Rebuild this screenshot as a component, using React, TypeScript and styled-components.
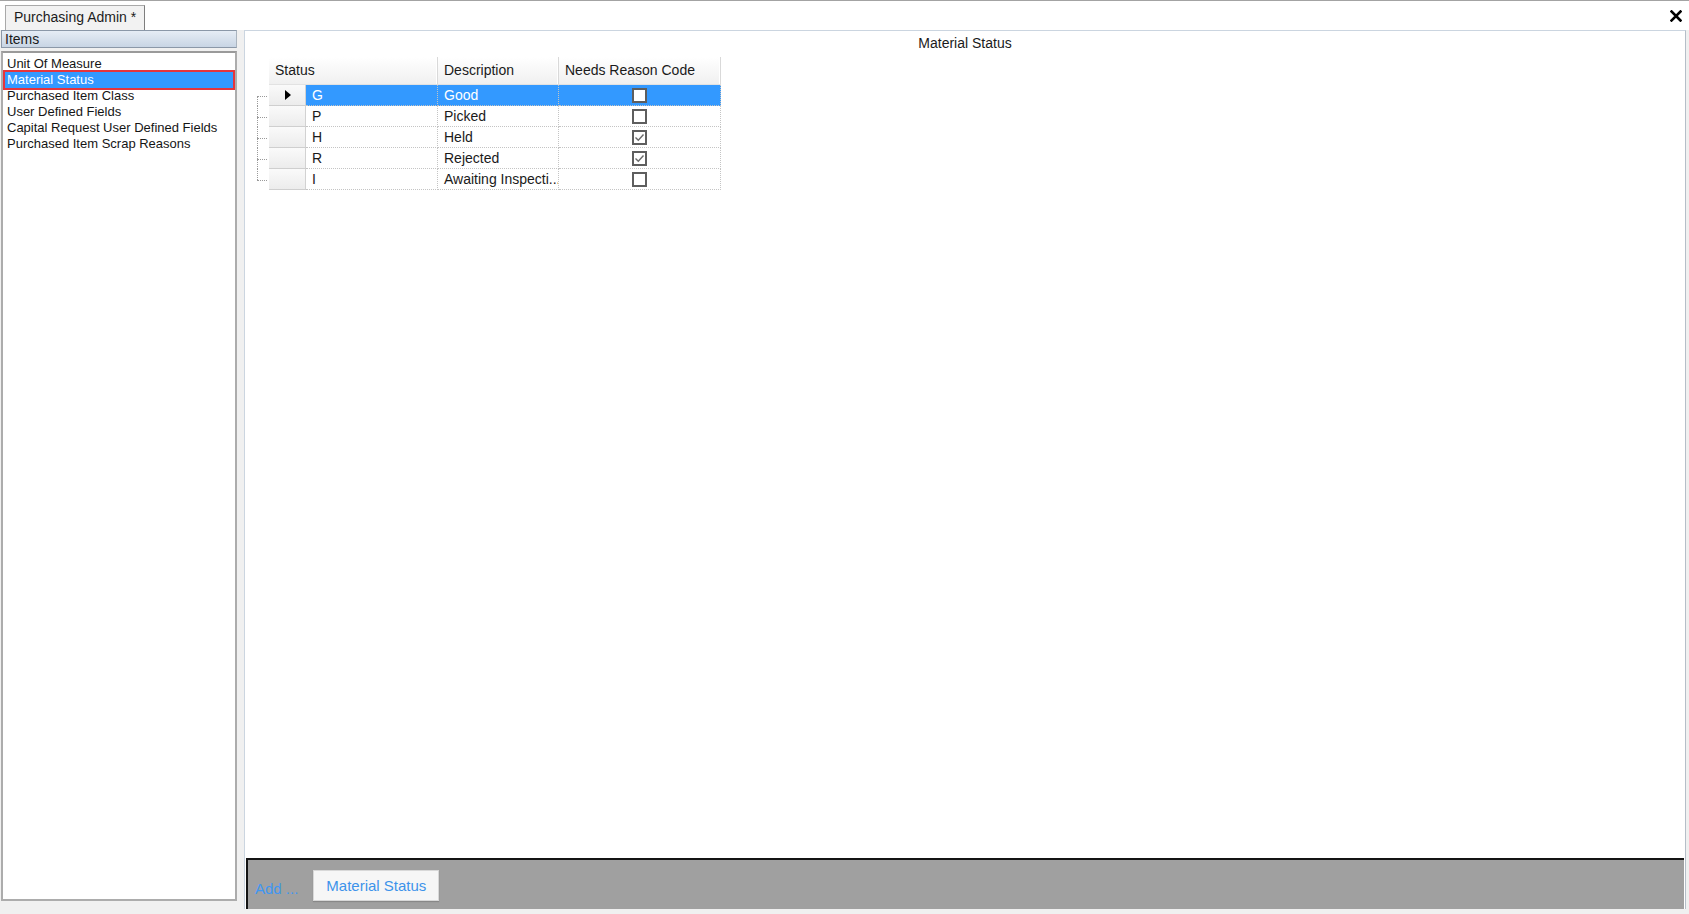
import React from 'react';
import styled, { createGlobalStyle } from 'styled-components';

const GlobalStyle = createGlobalStyle`
  html, body {
    margin: 0;
    padding: 0;
  }
  body {
    font-family: "Liberation Sans", Arial, sans-serif;
    background: #f0f0f0;
    color: #141414;
  }
  * {
    box-sizing: border-box;
  }
`;

const menuItems = [
  'Unit Of Measure',
  'Material Status',
  'Purchased Item Class',
  'User Defined Fields',
  'Capital Request User Defined Fields',
  'Purchased Item Scrap Reasons',
];

const rows = [
  { code: 'G', description: 'Good', needsReason: false },
  { code: 'P', description: 'Picked', needsReason: false },
  { code: 'H', description: 'Held', needsReason: true },
  { code: 'R', description: 'Rejected', needsReason: true },
  { code: 'I', description: 'Awaiting Inspecti...', needsReason: false },
];

const columns = { rowHeader: 37, status: 132, description: 121, needs: 162 };

export default function App() {
  const selectedItem = 'Material Status';
  const selectedRow = 0;

  return (
    <Window>
      <GlobalStyle />
      <TopStrip>
        <Tab>Purchasing Admin *</Tab>
        <CloseButton aria-label='close'>
          <svg width='12' height='12' viewBox='0 0 12 12'>
            <path d='M1.5 1.5 L10.5 10.5 M10.5 1.5 L1.5 10.5' stroke='#000' strokeWidth='2.6' strokeLinecap='square' />
          </svg>
        </CloseButton>
      </TopStrip>

      <Body>
        <LeftPanel>
          <ItemsHeader>Items</ItemsHeader>
          <ItemList>
            {menuItems.map((item) => (
              <ListItem key={item} $selected={item === selectedItem}>
                {item}
              </ListItem>
            ))}
          </ItemList>
        </LeftPanel>

        <RightPanel>
          <PanelTitle>Material Status</PanelTitle>
          <GridArea>
            <HeaderRow>
              <HeaderCell $width={columns.rowHeader + columns.status}>Status</HeaderCell>
              <HeaderCell $width={columns.description}>Description</HeaderCell>
              <HeaderCell $width={columns.needs}>Needs Reason Code</HeaderCell>
            </HeaderRow>
            {rows.map((row, i) => {
              const selected = i === selectedRow;
              return (
                <DataRow key={row.code}>
                  <Connector $first={i === 0} $last={i === rows.length - 1} />
                  <RowHeaderCell>
                    {selected && <RowArrow />}
                  </RowHeaderCell>
                  <DataCell $width={columns.status} $selected={selected}>{row.code}</DataCell>
                  <DataCell $width={columns.description} $selected={selected}>{row.description}</DataCell>
                  <CheckCell $width={columns.needs} $selected={selected}>
                    <CheckBox>
                      {row.needsReason && (
                        <svg width='11' height='11' viewBox='0 0 11 11'>
                          <path d='M1.5 5.5 L4.3 8.3 L9.5 2.5' fill='none' stroke='#6a6a6a' strokeWidth='1.4' />
                        </svg>
                      )}
                    </CheckBox>
                  </CheckCell>
                </DataRow>
              );
            })}
          </GridArea>
          <BottomBar>
            <AddLink>Add ...</AddLink>
            <BarButton>Material Status</BarButton>
          </BottomBar>
        </RightPanel>
      </Body>
    </Window>
  );
}

const Window = styled.div`
  width: 1689px;
  height: 914px;
  display: flex;
  flex-direction: column;
  background: #f0f0f0;
  overflow: hidden;
`;

const TopStrip = styled.div`
  flex: none;
  height: 30px;
  display: flex;
  align-items: flex-end;
  justify-content: space-between;
  padding: 0 7px 0 5px;
  background: #ffffff;
  border-top: 1px solid #a3a3a3;
`;

const Tab = styled.div`
  height: 25px;
  padding: 0 8px 0 8px;
  font-size: 14px;
  line-height: 23px;
  color: #1c1c1c;
  background: #f2f2f2;
  border: 1px solid #a9a9a9;
  border-right-color: #7e7e7e;
  border-bottom: none;
`;

const CloseButton = styled.div`
  align-self: center;
  width: 12px;
  height: 12px;
  display: flex;
`;

const Body = styled.div`
  flex: 1;
  min-height: 0;
  display: flex;
  gap: 7px;
`;

const LeftPanel = styled.div`
  width: 236px;
  margin-left: 1px;
  padding-bottom: 13px;
  display: flex;
  flex-direction: column;
`;

const ItemsHeader = styled.div`
  height: 18px;
  padding-left: 3px;
  font-size: 14px;
  line-height: 16px;
  color: #1a1a1a;
  background: linear-gradient(#e6edf5, #c8d5e4);
  border: 1px solid #8b98a8;
  border-right-color: #aab4bf;
`;

const ItemList = styled.div`
  flex: 1;
  margin-top: 3px;
  padding: 3px 2px;
  background: #ffffff;
  border: 2px solid #acacac;
  border-top-color: #9a9a9a;
`;

const ListItem = styled.div<{ $selected?: boolean }>`
  height: 16px;
  padding-left: 2px;
  font-size: 13px;
  line-height: 16px;
  white-space: nowrap;
  color: ${({ $selected }) => ($selected ? '#ffffff' : '#151515')};
  background: ${({ $selected }) => ($selected ? '#3399ff' : 'transparent')};
  outline: ${({ $selected }) => ($selected ? '2px solid #e5353c' : 'none')};
`;

const RightPanel = styled.div`
  flex: 1;
  margin-right: 3px;
  margin-bottom: 5px;
  display: flex;
  flex-direction: column;
  background: #ffffff;
  border: 1px solid #cbd5e0;
  border-right-color: #b5bec8;
  border-bottom: none;
`;

const PanelTitle = styled.div`
  height: 26px;
  padding-top: 4px;
  text-align: center;
  font-size: 14px;
  line-height: 16px;
  color: #1a1a1a;
`;

const GridArea = styled.div`
  flex: 1;
  padding-left: 12px;
`;

const HeaderRow = styled.div`
  display: flex;
  height: 28px;
  margin-left: 12px;
`;

const HeaderCell = styled.div<{ $width: number }>`
  width: ${({ $width }) => $width}px;
  padding-left: 6px;
  font-size: 14px;
  line-height: 27px;
  color: #1a1a1a;
  background: linear-gradient(#ffffff, #f0f0f0);
  border-right: 1px solid #d9d9d9;
  border-bottom: 1px solid #e2e2e2;
  box-shadow: inset -1px 0 0 #ffffff;
`;

const DataRow = styled.div`
  display: flex;
  height: 21px;
`;

const Connector = styled.div<{ $first?: boolean; $last?: boolean }>`
  position: relative;
  width: 12px;

  &::before {
    content: '';
    position: absolute;
    left: 0;
    top: ${({ $first }) => ($first ? '11px' : '0')};
    bottom: ${({ $last }) => ($last ? '10px' : '0')};
    border-left: 1px dotted #9a9a9a;
  }

  &::after {
    content: '';
    position: absolute;
    left: 0;
    width: 10px;
    top: 11px;
    border-top: 1px dotted #9a9a9a;
  }
`;

const RowHeaderCell = styled.div`
  width: ${columns.rowHeader}px;
  display: flex;
  align-items: center;
  justify-content: center;
  background: linear-gradient(#fafafa, #ececec);
  border-right: 1px solid #d2d2d2;
  border-bottom: 1px solid #cfcfcf;
`;

const RowArrow = styled.span`
  width: 0;
  height: 0;
  margin-left: 2px;
  border-top: 5px solid transparent;
  border-bottom: 5px solid transparent;
  border-left: 6px solid #000000;
`;

const DataCell = styled.div<{ $width: number; $selected?: boolean }>`
  width: ${({ $width }) => $width}px;
  padding-left: 6px;
  font-size: 14px;
  line-height: 20px;
  white-space: nowrap;
  overflow: hidden;
  color: ${({ $selected }) => ($selected ? '#ffffff' : '#1a1a1a')};
  background: ${({ $selected }) => ($selected ? '#3399ff' : '#ffffff')};
  border-right: 1px dotted #c4c4c4;
  border-bottom: 1px dotted #c4c4c4;
`;

const CheckCell = styled(DataCell)`
  display: flex;
  align-items: center;
  justify-content: center;
  padding-left: 0;
`;

const CheckBox = styled.div`
  width: 15px;
  height: 15px;
  display: flex;
  align-items: center;
  justify-content: center;
  background: #ffffff;
  border: 2px solid #5e5e5e;
`;

const BottomBar = styled.div`
  flex: none;
  height: 51px;
  margin: 0 1px 0 1px;
  display: flex;
  align-items: center;
  gap: 15px;
  padding: 2px 0 0 7px;
  background: #a0a0a0;
  border-top: 2px solid #141414;
  border-left: 2px solid #141414;
`;

const AddLink = styled.span`
  padding-top: 6px;
  font-size: 15px;
  color: #3f97f2;
`;

const BarButton = styled.div`
  width: 126px;
  height: 31px;
  display: flex;
  align-items: center;
  justify-content: center;
  font-size: 15px;
  color: #3d93ea;
  background: #f6f6f6;
  border: 1px solid #d8d8d8;
  box-shadow: 0 1px 1px rgba(0, 0, 0, 0.15);
`;
